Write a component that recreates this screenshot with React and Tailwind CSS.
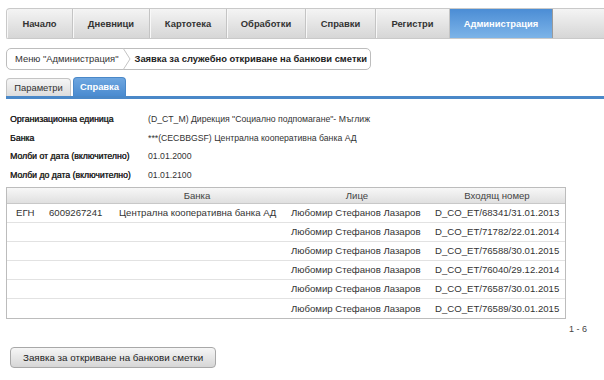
import React from "react";

const navItems = [
  ["Начало", "w-[66px]"],
  ["Дневници", "w-[77px]"],
  ["Картотека", "w-[77px]"],
  ["Обработки", "w-[79px]"],
  ["Справки", "w-[70px]"],
  ["Регистри", "w-[74px]"],
];

const rows = [
  ["ЕГН", "6009267241", "Централна кооперативна банка АД", "Любомир Стефанов Лазаров", "D_CO_ET/68341/31.01.2013"],
  ["", "", "", "Любомир Стефанов Лазаров", "D_CO_ET/71782/22.01.2014"],
  ["", "", "", "Любомир Стефанов Лазаров", "D_CO_ET/76588/30.01.2015"],
  ["", "", "", "Любомир Стефанов Лазаров", "D_CO_ET/76040/29.12.2014"],
  ["", "", "", "Любомир Стефанов Лазаров", "D_CO_ET/76587/30.01.2015"],
  ["", "", "", "Любомир Стефанов Лазаров", "D_CO_ET/76589/30.01.2015"],
];

const fields = [
  ["Организационна единица", "(D_CT_M) Дирекция \"Социално подпомагане\"- Мъглиж"],
  ["Банка", "***(CECBBGSF) Централна кооперативна банка АД"],
  ["Молби от дата (включително)", "01.01.2000"],
  ["Молби до дата (включително)", "01.01.2100"],
];

export default function App() {
  return (
    <div className="w-[604px] h-[380px] bg-white overflow-hidden text-[9.4px] leading-[12px] text-[#333] font-['Liberation_Sans',Arial,sans-serif]">
      {/* Top nav */}
      <div className="pt-[8px] pl-[6px]">
        <div className="flex h-[31px] rounded-tl-[4px] rounded-bl-[2px] border border-[#c9c9c9] border-r-0 bg-gradient-to-b from-[#f4f4f4] to-[#d6d6d6] overflow-hidden">
          {navItems.map(([t, w]) => (
            <div
              key={t}
              className={`${w} flex items-center justify-center font-bold text-[#333] border-r border-[#c4c4c4] shadow-[inset_1px_0_0_#f8f8f8]`}
            >
              {t}
            </div>
          ))}
          <div className="w-[103px] flex items-center justify-center font-bold text-white bg-gradient-to-b from-[#4b8dd5] to-[#7db4e8] border-r border-[#9a9a9a]">
            Администрация
          </div>
          <div className="flex-1" />
        </div>
      </div>

      {/* Breadcrumb */}
      <div className="pl-[6px] mt-[9px]">
        <div className="inline-flex items-center h-[22px] rounded-[5px] border border-[#bdbdbd] bg-white">
          <span className="pl-[8px] pr-[3px] text-[#333]">Меню "Администрация"</span>
          <svg width="10" height="22" viewBox="0 0 10 22" className="shrink-0">
            <path d="M1 0 L8 11 L1 22" fill="none" stroke="#c4c4c4" strokeWidth="1" />
          </svg>
          <span className="pl-[3px] pr-[3px] font-bold text-[#222]">
            Заявка за служебно откриване на банкови сметки
          </span>
        </div>
      </div>

      {/* Sub tabs */}
      <div className="pl-[6px] mt-[7px]">
        <div className="flex items-end gap-[2px] h-[19px]">
          <div className="h-[18px] w-[65px] flex items-center justify-center rounded-t-[4px] border border-b-0 border-[#c4c4c4] bg-gradient-to-b from-[#f6f6f6] to-[#dcdcdc] text-[#333]">
            Параметри
          </div>
          <div className="h-[19px] w-[53px] flex items-center justify-center rounded-t-[4px] border border-b-0 border-[#4a88c8] bg-gradient-to-b from-[#6ea6e0] to-[#4a8bd0] text-white font-bold">
            Справка
          </div>
        </div>
        <div className="h-[3px] bg-[#4a88c8]" />
      </div>

      {/* Fields */}
      <div className="pl-[10px] pt-[11px] flex flex-col text-[8.7px]">
        {fields.map(([l, v]) => (
          <div key={l} className="flex h-[18.5px] items-center">
            <span className="w-[138px] text-[#222] [text-shadow:0.35px_0_0_#222]">{l}</span>
            <span className="text-[#333]">{v}</span>
          </div>
        ))}
      </div>

      {/* Table */}
      <div className="pl-[6px] mt-[3px]">
        <div className="w-[560px] border border-[#bcbcbc] text-[9.6px]">
          <div className="flex h-[16px] items-center bg-gradient-to-b from-[#f7f7f7] to-[#e0e0e0] border-b border-[#c8c8c8] text-[#444]">
            <div className="w-[102px]" />
            <div className="w-[176px] text-center">Банка</div>
            <div className="w-[144px] text-center">Лице</div>
            <div className="flex-1 text-center">Входящ номер</div>
          </div>
          {rows.map((r, i) => (
            <div
              key={i}
              className={`flex h-[19px] items-center ${i < rows.length - 1 ? "border-b border-[#e2e2e2]" : ""}`}
            >
              <div className="w-[34px] pl-[9px]">{r[0]}</div>
              <div className="w-[68px] pl-[8px]">{r[1]}</div>
              <div className="w-[176px] pl-[10px]">{r[2]}</div>
              <div className="w-[144px] pl-[6px]">{r[3]}</div>
              <div className="flex-1 pl-[6px]">{r[4]}</div>
            </div>
          ))}
        </div>
      </div>

      {/* Pager */}
      <div className="w-[587px] flex justify-end mt-[4px] text-[9px] text-[#444]">1 - 6</div>

      {/* Button */}
      <div className="pl-[10px] mt-[12px]">
        <button className="h-[21px] px-[12px] rounded-[4px] border border-[#a8a8a8] bg-gradient-to-b from-[#f6f6f6] to-[#d6d6d6] text-[#222] text-[9.8px] font-['Liberation_Sans',Arial,sans-serif]">
          Заявка за откриване на банкови сметки
        </button>
      </div>
    </div>
  );
}
